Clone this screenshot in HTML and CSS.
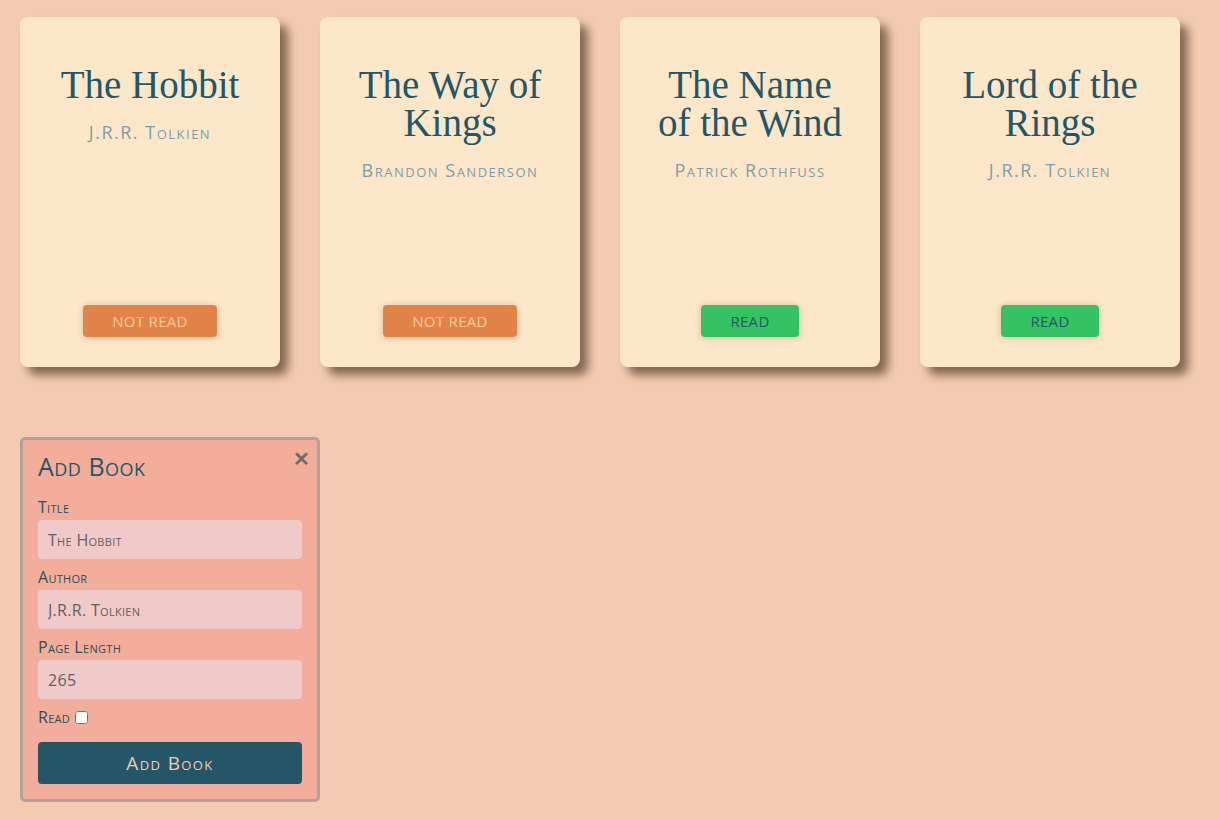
FILE: index.html
```html
<!DOCTYPE html>
<html>
<head>
<meta charset="utf-8">
<link rel="stylesheet" href="styles.css">
</head>
<body>
<main class="page">
  <section class="library">
    <article class="card">
      <h2 class="card-title">The Hobbit</h2>
      <p class="card-author">J.R.R. Tolkien</p>
      <button class="status status-not">Not Read</button>
    </article>
    <article class="card">
      <h2 class="card-title">The Way of Kings</h2>
      <p class="card-author">Brandon Sanderson</p>
      <button class="status status-not">Not Read</button>
    </article>
    <article class="card">
      <h2 class="card-title">The Name of the Wind</h2>
      <p class="card-author">Patrick Rothfuss</p>
      <button class="status status-read">Read</button>
    </article>
    <article class="card">
      <h2 class="card-title">Lord of the Rings</h2>
      <p class="card-author">J.R.R. Tolkien</p>
      <button class="status status-read">Read</button>
    </article>
  </section>

  <form class="add-form">
    <div class="form-head">
      <h3 class="form-title">Add Book</h3>
      <span class="close">&#x2715;</span>
    </div>
    <label class="field-label" for="title">Title</label>
    <input class="field" id="title" type="text" value="The Hobbit">
    <label class="field-label" for="author">Author</label>
    <input class="field" id="author" type="text" value="J.R.R. Tolkien">
    <label class="field-label" for="pages">Page Length</label>
    <input class="field" id="pages" type="text" value="265">
    <div class="read-row">
      <label class="field-label" for="read">Read</label>
      <input class="check" id="read" type="checkbox">
    </div>
    <button type="button" class="submit">Add Book</button>
  </form>
</main>
</body>
</html>
```
FILE: styles.css
```css
* { box-sizing: border-box; }
html, body { margin: 0; padding: 0; }
body {
  background: #f3cbb0;
  font-family: "Open Sans", "Liberation Sans", sans-serif;
  width: 1220px;
  height: 820px;
  overflow: hidden;
}
.page {
  padding: 17px 20px;
}
.library {
  display: flex;
  gap: 40px;
}
.card {
  width: 260px;
  height: 350px;
  background: #fde7c9;
  border-radius: 8px;
  box-shadow: 8px 8px 10px rgba(60, 35, 20, 0.6);
  display: flex;
  flex-direction: column;
  align-items: center;
  padding: 49px 20px 30px;
}
.card-title {
  margin: 0;
  font-family: "Liberation Serif", serif;
  font-weight: normal;
  font-size: 39px;
  line-height: 38px;
  color: #225669;
  text-align: center;
  padding: 0 12px;
}
.card-author {
  margin: 17px 0 0;
  font-size: 18px;
  font-variant: small-caps;
  letter-spacing: 1.5px;
  color: #7b9ea9;
  line-height: 22px;
}
.status {
  margin-top: auto;
  border: none;
  border-radius: 4px;
  height: 32px;
  font-family: "Open Sans", sans-serif;
  font-size: 15px;
  text-transform: uppercase;
  letter-spacing: 0.3px;
  box-shadow: 0 1px 6px rgba(120, 80, 40, 0.3);
}
.status-not {
  width: 134px;
  background: #e2844a;
  color: #f6caa6;
}
.status-read {
  width: 98px;
  background: #35c262;
  color: #245669;
}
.add-form {
  margin-top: 70px;
  width: 300px;
  background: #f2ae9b;
  border: 3px solid #b3a19d;
  border-radius: 5px;
  padding: 11px 15px 15px;
  display: flex;
  flex-direction: column;
  font-variant: small-caps;
}
.form-head {
  display: flex;
  justify-content: space-between;
  align-items: flex-start;
  margin-bottom: 8px;
}
.form-title {
  margin: 0;
  font-size: 25px;
  font-weight: 500;
  color: #225669;
  letter-spacing: 0.5px;
  line-height: 30px;
}
.close {
  font-size: 20px;
  font-weight: bold;
  color: #666c70;
  margin-right: -8px;
  margin-top: -6px;
  font-variant: normal;
}
.field-label {
  font-size: 16px;
  font-weight: 500;
  color: #2a4f5e;
  line-height: 20px;
  margin-top: 8px;
  letter-spacing: 0.3px;
}
.field {
  margin-top: 3px;
  height: 39px;
  border: none;
  border-radius: 4px;
  background: #f0cac8;
  padding: 0 10px;
  font-family: "Open Sans", sans-serif;
  font-variant: small-caps;
  font-size: 16px;
  color: #5e6165;
  letter-spacing: 0.3px;
  outline: none;
}
.read-row {
  display: flex;
  align-items: center;
  gap: 5px;
  margin-top: 0;
}
.check {
  margin: 8px 0 0;
  width: 13px;
  height: 13px;
}
.submit {
  margin-top: 15px;
  height: 42px;
  border: none;
  border-radius: 4px;
  background: #245668;
  color: #f3cbb0;
  font-family: "Open Sans", sans-serif;
  font-variant: small-caps;
  font-weight: 500;
  font-size: 19px;
  letter-spacing: 1.4px;
}
```
